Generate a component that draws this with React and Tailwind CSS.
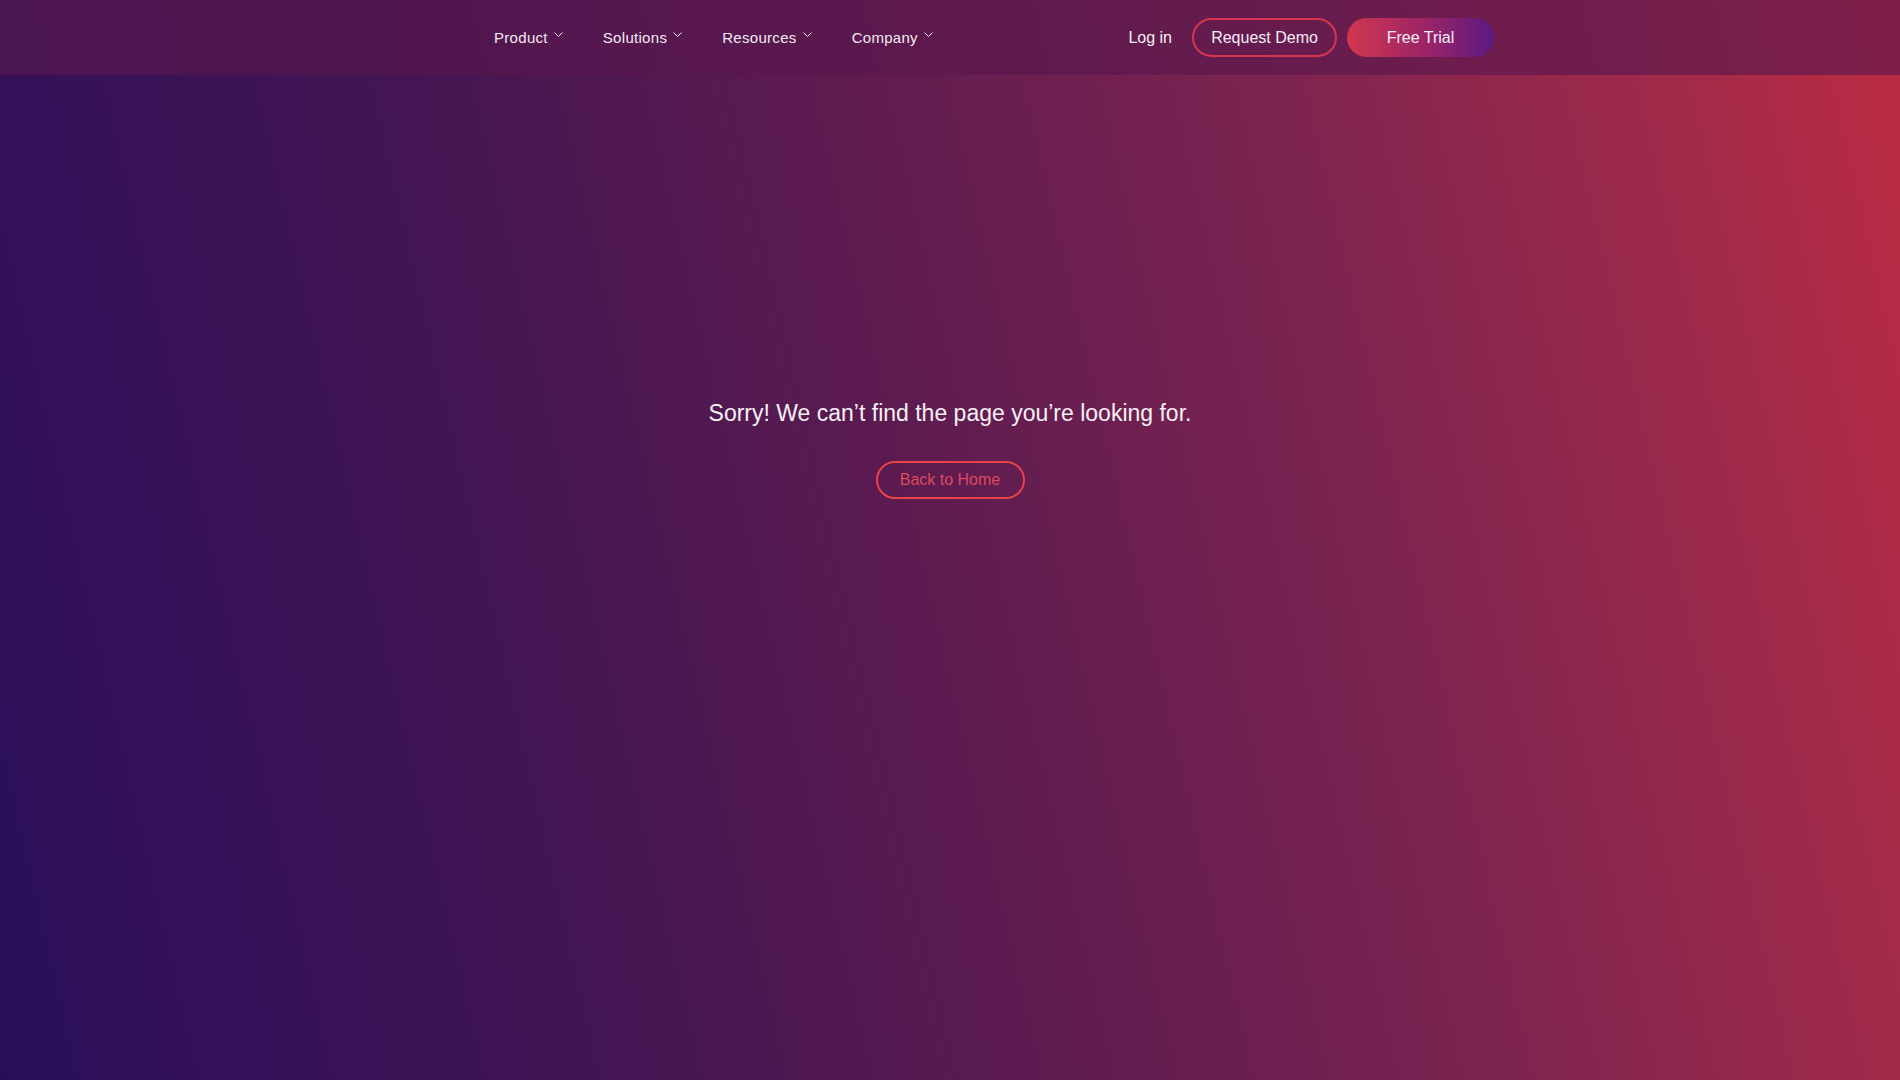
const navItems = ['Product', 'Solutions', 'Resources', 'Company']

function Chevron() {
  return (
    <svg width="9" height="5" viewBox="0 0 9 5" fill="none" className="ml-[6px] mt-[-6px]">
      <path d="M0.5 0.5L4.5 4.5L8.5 0.5" stroke="currentColor" strokeWidth="1" />
    </svg>
  )
}

export default function App() {
  return (
    <div
      className="min-h-screen h-[1080px] text-white bg-[linear-gradient(77deg,#270f58_0%,#35115a_11%,#3f1453_26%,#5c1b50_48%,#7d2450_70%,#a02a4a_88%,#bc2b42_100%)]"
      style={{ fontFamily: '"Liberation Sans", Arial, sans-serif' }}
    >
      {/* header */}
      <header className="h-[75px] bg-[rgba(88,22,78,0.62)]">
        <div className="w-[1100px] mx-auto h-full flex items-center pl-[94px] pr-[6px]">
          <nav className="flex items-center gap-[40px]">
            {navItems.map(item => (
              <a key={item} href="#" className="flex items-center text-[15px] leading-[22px] tracking-[0.3px] text-[#f3e9f2]">
                {item}
                <Chevron />
              </a>
            ))}
          </nav>
          <div className="ml-auto flex items-center">
            <a href="#" className="text-[16px] text-[#f6eef5] mr-[20px]">Log in</a>
            <a href="#" className="w-[145px] h-[39px] flex items-center justify-center rounded-full border-2 border-[#d5374f] text-[16px] text-[#f6eef5] mr-[10px]">
              Request Demo
            </a>
            <a href="#" className="w-[147px] h-[39px] flex items-center justify-center rounded-full bg-[linear-gradient(to_right,#d1364e,#9a2467_55%,#5a1a82)] text-[16px] text-[#f6eef5]">
              Free Trial
            </a>
          </div>
        </div>
      </header>

      {/* 404 */}
      <main className="pt-[321px] flex flex-col items-center">
        <p className="text-center text-[23px] leading-[34px] text-[#f7f0f6]">
          Sorry! We can’t find the page you’re looking for.
        </p>
        <a href="#" className="mt-[31px] w-[149px] h-[38px] flex items-center justify-center rounded-full border-2 border-[#e8424a] text-[16px] text-[#dc4a5e]">
          Back to Home
        </a>
      </main>
    </div>
  )
}
